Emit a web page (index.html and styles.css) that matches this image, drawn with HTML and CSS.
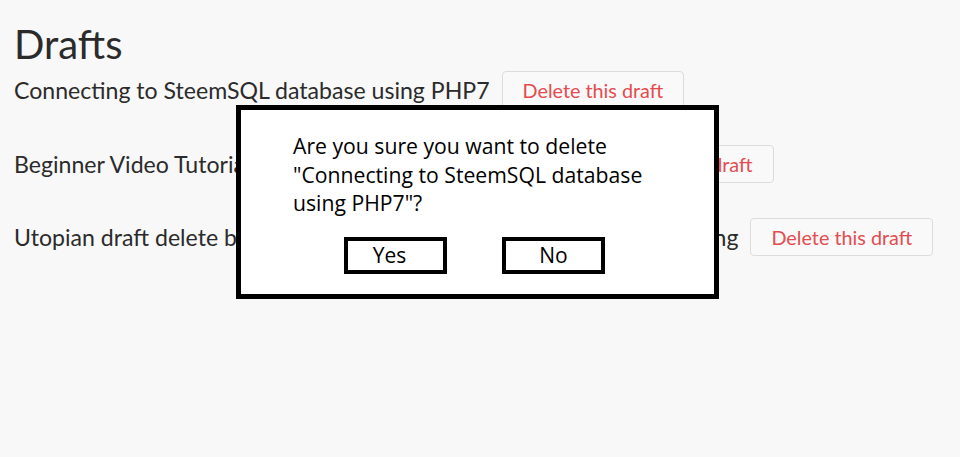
FILE: index.html
```html
<!DOCTYPE html>
<html>
<head>
<meta charset="utf-8">
<link rel="stylesheet" href="styles.css">
</head>
<body>
<main class="page">
  <h1 class="title">Drafts</h1>
  <ul class="drafts">
    <li class="draft">
      <span class="draft-title">Connecting to SteemSQL database using PHP7</span>
      <button class="delete-btn">Delete this draft</button>
    </li>
    <li class="draft">
      <span class="draft-title">Beginner Video Tutorial for Steem Developers in Python</span>
      <button class="delete-btn">Delete this draft</button>
    </li>
    <li class="draft">
      <span class="draft-title">Utopian draft delete bug: drafts are not removed from list on confirming</span>
      <button class="delete-btn">Delete this draft</button>
    </li>
  </ul>
</main>
<div class="dialog">
  <p class="dialog-text">Are you sure you want to delete "Connecting to SteemSQL database using PHP7"?</p>
  <div class="dialog-actions">
    <button class="dialog-btn dialog-btn-yes">Yes</button>
    <button class="dialog-btn">No</button>
  </div>
</div>
</body>
</html>
```

FILE: styles.css
```css
html, body {
  margin: 0;
  padding: 0;
  background: #f8f8f8;
}
body {
  font-family: Lato, "Liberation Sans", sans-serif;
  color: #2b2b2b;
  width: 960px;
  height: 457px;
  overflow: hidden;
  position: relative;
}
.page {
  padding: 20px 14px 0;
}
.title {
  font-size: 40px;
  font-weight: 400;
  line-height: 48px;
  margin: 0 0 3px;
}
.drafts {
  list-style: none;
  margin: 0;
  padding: 0;
  display: flex;
  flex-direction: column;
  gap: 35.5px;
}
.draft {
  display: flex;
  align-items: center;
  gap: 12px;
  white-space: nowrap;
}
.draft-title {
  font-size: 23.1px;
}
.delete-btn {
  font-family: Lato, "Liberation Sans", sans-serif;
  font-size: 19.8px;
  color: #e44c4f;
  background: #f9f9f9;
  border: 1px solid #dcdcdc;
  border-radius: 4px;
  height: 38px;
  padding: 0 20px;
}
.dialog {
  position: absolute;
  left: 236px;
  top: 105px;
  width: 473px;
  height: 184px;
  border: 5px solid #000;
  background: #fff;
  box-sizing: content-box;
  display: flex;
  flex-direction: column;
}
.dialog-text {
  font-family: "Open Sans", "Liberation Sans", sans-serif;
  font-size: 21.2px;
  line-height: 28.5px;
  color: #000;
  margin: 22px 0 0 52px;
  width: 380px;
}
.dialog-actions {
  display: flex;
  justify-content: center;
  gap: 55px;
  margin: 19px 0 0 -6px;
}
.dialog-btn {
  font-family: "Open Sans", "Liberation Sans", sans-serif;
  font-size: 21px;
  color: #000;
  background: #fff;
  border: 4px solid #000;
  border-radius: 0;
  width: 103px;
  height: 37px;
  padding: 0;
  line-height: 26px;
}
.dialog-btn-yes {
  padding-right: 12px;
}
```
